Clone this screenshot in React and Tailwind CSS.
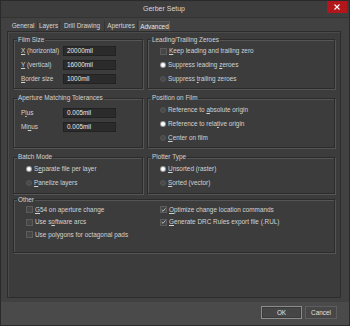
import React from "react";

function U({ children }) {
  return <span className="underline underline-offset-[1px] decoration-[0.6px]">{children}</span>;
}

function Radio({ on }) {
  return on ? (
    <span className="w-[6px] h-[6px] rounded-full bg-[#9a9a9a] flex items-center justify-center shrink-0">
      <span className="w-[4px] h-[4px] rounded-full bg-[#ffffff]" />
    </span>
  ) : (
    <span className="w-[6px] h-[6px] rounded-full bg-[#4a4a4a] border border-[#575757] shrink-0" />
  );
}

function Check({ on }) {
  return (
    <span className="w-[7px] h-[7px] bg-[#464646] border border-[#5c5c5c] flex items-center justify-center shrink-0">
      {on && (
        <svg width="6" height="6" viewBox="0 0 6 6">
          <path d="M0.8 3.1 L2.4 4.6 L5.3 1.2" fill="none" stroke="#e0e0e0" strokeWidth="0.9" />
        </svg>
      )}
    </span>
  );
}

function Group({ title, className, children }) {
  return (
    <fieldset className={"border border-[#2b2b2b] shadow-[1px_1px_0_#555,inset_1px_1px_0_#555] min-w-0 " + className}>
      <legend className="ml-[3px] px-[1px] leading-[8px] text-[#d2d2d2] bg-[#3c3c3c]">{title}</legend>
      {children}
    </fieldset>
  );
}

function Field({ label, value }) {
  return (
    <div className="h-[14px] flex items-center">
      <span className="w-[42px] shrink-0">{label}</span>
      <div className="w-[53px] h-[10px] bg-[#2b2b2b] border border-[#222] flex items-center pl-[3px] text-[#e8e8e8]">{value}</div>
    </div>
  );
}

function RItem({ on, children, h = "h-[14px]" }) {
  return (
    <div className={h + " flex items-center gap-[2px]"}>
      <Radio on={on} />
      <span>{children}</span>
    </div>
  );
}

function CItem({ on, children }) {
  return (
    <div className="h-[12.5px] flex items-center gap-[2px]">
      <Check on={on} />
      <span>{children}</span>
    </div>
  );
}

export default function App() {
  const tabs = [
    ["General", "w-[29px]"],
    ["Layers", "w-[22px]"],
    ["Drill Drawing", "w-[45px]"],
    ["Apertures", "w-[33px]"],
  ];
  return (
    <div className="w-[350px] h-[326px] bg-[#414141] flex flex-col border border-[#2a2a2a] text-[#d2d2d2] font-['Liberation_Sans',Arial,sans-serif] text-[6.4px] leading-[8px] overflow-hidden">
      {/* Title bar */}
      <div className="h-[17px] shrink-0 flex items-start border-b border-[#333] bg-[#3d3d3d]">
        <div className="flex-1 h-full flex items-center justify-center text-[7px] text-[#d8d8d8]">Gerber Setup</div>
        <div className="w-[20px] h-[12px] bg-[#b2161b] mr-[2px] flex items-center justify-center">
          <svg width="6" height="6" viewBox="0 0 6 6">
            <path d="M0.5 0.5 L5.5 5.5 M5.5 0.5 L0.5 5.5" stroke="#ffffff" strokeWidth="1.1" />
          </svg>
        </div>
      </div>

      {/* Tabs */}
      <div className="mt-[3px] h-[10px] shrink-0 flex pl-[8px]">
        {tabs.map(([t, w]) => (
          <div key={t} className={w + " h-full flex items-center justify-center border-r border-[#353535] text-[#d6d6d6]"}>
            {t}
          </div>
        ))}
        <div className="w-[31px] ml-[1px] h-full flex items-center justify-center bg-[#4b4b4b] border border-b-0 border-[#5a5a5a] text-[#e6e6e6]">
          Advanced
        </div>
      </div>

      {/* Panel */}
      <div className="ml-[6px] mr-[8px] h-[267px] shrink-0 border border-[#2c2c2c] bg-[#3c3c3c] shadow-[inset_1px_1px_0_#4a4a4a] px-[5px] pt-[3.5px] flex flex-col">
        <div className="grid grid-cols-[130px_188px] gap-x-[4px]">
          <Group title="Film Size" className="h-[53.5px]">
            <div className="pl-[7px] pt-[0.5px]">
              <Field label={<><U>X</U> (horizontal)</>} value="20000mil" />
              <Field label={<><U>Y</U> (vertical)</>} value="16000mil" />
              <Field label={<><U>B</U>order size</>} value="1000mil" />
            </div>
          </Group>
          <Group title="Leading/Trailing Zeroes" className="h-[53.5px]">
            <div className="pl-[12px] pt-[0.5px]">
              <div className="h-[14px] flex items-center gap-[2px]">
                <Check on={false} />
                <span><U>K</U>eep leading and trailing zero</span>
              </div>
              <RItem on>Suppress leading <U>z</U>eroes</RItem>
              <RItem on={false}>Suppress <U>t</U>railing zeroes</RItem>
            </div>
          </Group>
        </div>

        <div className="grid grid-cols-[130px_188px] gap-x-[4px] mt-[5px]">
          <Group title="Aperture Matching Tolerances" className="h-[53.5px]">
            <div className="pl-[7px] pt-[3.5px]">
              <Field label={<>P<U>l</U>us</>} value="0.005mil" />
              <Field label={<>Mi<U>n</U>us</>} value="0.005mil" />
            </div>
          </Group>
          <Group title="Position on Film" className="h-[53.5px]">
            <div className="pl-[12px] pt-[1px]">
              <RItem on={false}>Reference to <U>a</U>bsolute origin</RItem>
              <RItem on>Reference to rela<U>t</U>ive origin</RItem>
              <RItem on={false}><U>C</U>enter on film</RItem>
            </div>
          </Group>
        </div>

        <div className="grid grid-cols-[130px_188px] gap-x-[4px] mt-[5.5px]">
          <Group title="Batch Mode" className="h-[41px]">
            <div className="pl-[12px] pt-[1.5px]">
              <RItem on h="h-[13.5px]">S<U>e</U>parate file per layer</RItem>
              <RItem on={false} h="h-[13.5px]"><U>P</U>anelize layers</RItem>
            </div>
          </Group>
          <Group title="Plotter Type" className="h-[41px]">
            <div className="pl-[12px] pt-[1.5px]">
              <RItem on h="h-[13.5px]"><U>U</U>nsorted (raster)</RItem>
              <RItem on={false} h="h-[13.5px]"><U>S</U>orted (vector)</RItem>
            </div>
          </Group>
        </div>

        <Group title="Other" className="h-[57px] mt-[1.5px]">
          <div className="pl-[12px] grid grid-cols-[134px_1fr]">
            <div>
              <CItem on={false}><U>G</U>54 on aperture change</CItem>
              <CItem on={false}>Use s<U>o</U>ftware arcs</CItem>
              <CItem on={false}>Use polygons for octagonal pads</CItem>
            </div>
            <div>
              <CItem on><U>O</U>ptimize change location commands</CItem>
              <CItem on><U>G</U>enerate DRC Rules export file (.RUL)</CItem>
            </div>
          </div>
        </Group>
      </div>

      <div className="h-[4px] shrink-0" />

      {/* Bottom bar */}
      <div className="flex-1 bg-[#4a4a4a] flex justify-end items-start pt-[4px] pr-[12px] gap-[3px]">
        <div className="w-[41px] h-[13px] border border-[#8c8c8c] bg-[#464646] shadow-[inset_0_0_0_1px_#3a3a3a] flex items-center justify-center text-[#e0e0e0]">
          OK
        </div>
        <div className="w-[32px] h-[13px] border border-[#5e5e5e] bg-[#474747] flex items-center justify-center text-[#e0e0e0]">
          Cancel
        </div>
      </div>
    </div>
  );
}
